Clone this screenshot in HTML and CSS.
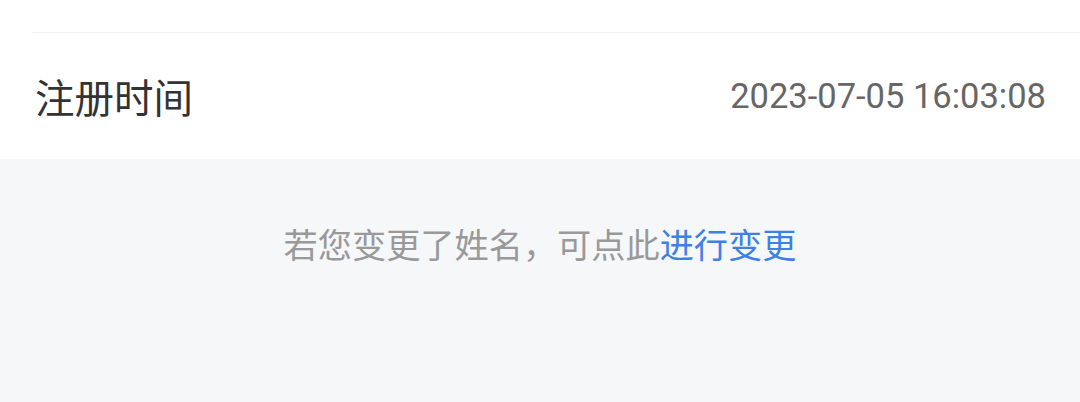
FILE: index.html
```html
<!DOCTYPE html>
<html lang="zh-CN">
<head>
<meta charset="utf-8">
<title>注册时间</title>
<link rel="stylesheet" href="styles.css">
</head>
<body>
<div class="card">
  <div class="cell cell-prev"></div>
  <div class="cell cell-row">
    <span class="label">注册时间</span>
    <span class="value">2023-07-05 16:03:08</span>
  </div>
</div>
<p class="hint">若您变更了姓名，可点此<a class="link" href="#">进行变更</a></p>
</body>
</html>
```
FILE: styles.css
```css
html, body {
  margin: 0;
  padding: 0;
}
body {
  background: #f6f7f9;
  font-family: "Noto Sans CJK SC", "Noto Sans", sans-serif;
  width: 1080px;
  height: 402px;
  overflow: hidden;
}
.card {
  background: #ffffff;
  padding-left: 32px;
}
.cell-prev {
  height: 32px;
  border-bottom: 1px solid #f0f0f2;
}
.cell-row {
  height: 126px;
  display: flex;
  align-items: center;
  justify-content: space-between;
  padding: 0 34px 0 3px;
}
.label {
  font-size: 39.5px;
  color: #333333;
  line-height: 1;
}
.value {
  font-family: Roboto, "Noto Sans CJK SC", sans-serif;
  font-size: 34.5px;
  color: #666666;
  line-height: 1;
}
.hint {
  margin: 0;
  padding-top: 60px;
  text-align: center;
  font-size: 34.2px;
  line-height: 48px;
  color: #999999;
}
.link {
  color: #3e80e6;
  text-decoration: none;
}
```
